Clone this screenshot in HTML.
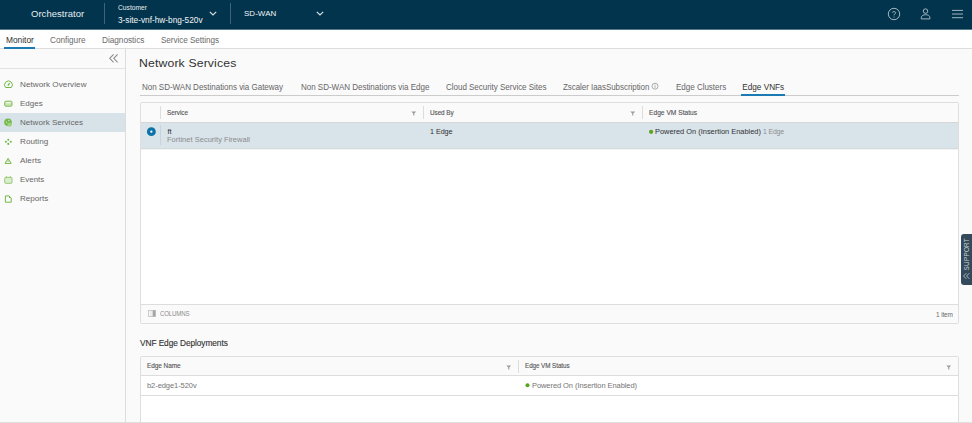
<!DOCTYPE html>
<html><head><meta charset="utf-8"><style>
html,body{margin:0;padding:0;width:972px;height:423px;overflow:hidden;background:#fafafa;font-family:"Liberation Sans", sans-serif}
.r{position:absolute;display:block}
.t{position:absolute;white-space:nowrap;font-family:"Liberation Sans", sans-serif}
</style></head><body>
<div class="r" style="left:0px;top:0px;width:972px;height:423px;background:#fafafa;"></div><div class="r" style="left:0px;top:0px;width:972px;height:29px;background:#02354d;"></div><div class="r" style="left:0px;top:28px;width:972px;height:1px;background:#012f45;"></div><div class="r" style="left:0px;top:29px;width:972px;height:1px;background:#557a8d;"></div><div class="r" style="left:0px;top:30px;width:972px;height:18px;background:#ffffff;"></div><div class="r" style="left:0px;top:48px;width:972px;height:1px;background:#dddddd;"></div><div class="r" style="left:104px;top:3px;width:1px;height:21px;background:#3f6479;"></div><div class="r" style="left:230px;top:3px;width:1px;height:21px;background:#3f6479;"></div><div class="r" style="left:4px;top:47px;width:31px;height:2px;background:#1a7bb3;"></div><div class="r" style="left:125px;top:49px;width:1px;height:374px;background:#dddddd;"></div><div class="r" style="left:0px;top:68px;width:125px;height:1px;background:#e3e3e3;"></div><div class="r" style="left:0px;top:113px;width:125px;height:19px;background:#d8e3e9;"></div><div class="r" style="left:140px;top:95px;width:819px;height:1px;background:#cccccc;"></div><div class="r" style="left:741px;top:94px;width:44px;height:2px;background:#1a7bb3;"></div><div class="r" style="left:140px;top:102px;width:819px;height:222px;background:#ffffff;border:1px solid #dedede;border-radius:2px;box-sizing:border-box"></div><div class="r" style="left:141px;top:103px;width:817px;height:19px;background:#fafafa;"></div><div class="r" style="left:141px;top:122px;width:817px;height:1px;background:#d6d6d6;"></div><div class="r" style="left:141px;top:123px;width:817px;height:25px;background:#d8e3ea;"></div><div class="r" style="left:141px;top:148px;width:817px;height:1px;background:#d5dadd;"></div><div class="r" style="left:141px;top:149px;width:817px;height:1px;background:#f3f3f3;"></div><div class="r" style="left:141px;top:304px;width:817px;height:1px;background:#dddddd;"></div><div class="r" style="left:141px;top:305px;width:817px;height:18px;background:#fafafa;"></div><div class="r" style="left:160px;top:106px;width:1px;height:13px;background:#dddddd;"></div><div class="r" style="left:160px;top:125px;width:1px;height:20px;background:#c8d2d8;"></div><div class="r" style="left:423px;top:106px;width:1px;height:13px;background:#dddddd;"></div><div class="r" style="left:642px;top:106px;width:1px;height:13px;background:#dddddd;"></div><div class="r" style="left:140px;top:356px;width:819px;height:80px;background:#ffffff;border:1px solid #dedede;border-radius:2px;box-sizing:border-box"></div><div class="r" style="left:141px;top:357px;width:817px;height:18px;background:#fafafa;"></div><div class="r" style="left:141px;top:375px;width:817px;height:1px;background:#dddddd;"></div><div class="r" style="left:141px;top:395px;width:817px;height:1px;background:#dddddd;"></div><div class="r" style="left:518px;top:360px;width:1px;height:13px;background:#dddddd;"></div><div class="r" style="left:0px;top:422px;width:972px;height:1px;background:#e0e0e0;"></div><div class="r" style="left:960.5px;top:233.5px;width:14px;height:51.5px;background:#34495a;border-radius:3px 0 0 3px"></div>
<svg class="r" style="left:208px;top:10px" width="10" height="7" viewBox="0 0 10 7"><path d="M1.8 1.8 L5 5 L8.2 1.8" fill="none" stroke="#d8e0e5" stroke-width="1.2"/></svg><svg class="r" style="left:314.5px;top:10px" width="10" height="7" viewBox="0 0 10 7"><path d="M1.8 1.8 L5 5 L8.2 1.8" fill="none" stroke="#d8e0e5" stroke-width="1.2"/></svg><svg class="r" style="left:886px;top:6px" width="16" height="16" viewBox="0 0 16 16"><circle cx="8" cy="8" r="5.7" fill="none" stroke="#b3c2cb" stroke-width="0.9"/><path d="M6.3 6.6 C6.3 5.3 9.7 5.3 9.7 6.8 C9.7 8 8 7.9 8 9.4" fill="none" stroke="#b3c2cb" stroke-width="0.9"/><circle cx="8" cy="10.9" r="0.5" fill="#b3c2cb"/></svg><svg class="r" style="left:918px;top:6px" width="16" height="16" viewBox="0 0 16 16"><circle cx="7.5" cy="5.1" r="2.25" fill="none" stroke="#b3c2cb" stroke-width="0.9"/><path d="M3.3 12.9 V11.6 C3.3 9.7 5.4 8.7 7.6 8.7 C9.8 8.7 11.9 9.7 11.9 11.6 V12.9 Z" fill="none" stroke="#b3c2cb" stroke-width="0.9"/></svg><svg class="r" style="left:950px;top:6px" width="16" height="16" viewBox="0 0 16 16"><path d="M2 4.4 H13 M2 8 H13 M2 11.7 H13" stroke="#b3c2cb" stroke-width="0.9"/></svg><svg class="r" style="left:107px;top:53px" width="14" height="12" viewBox="0 0 14 12"><path d="M6.6 1.3 L2.7 5.3 L6.6 9.3 M10.6 1.3 L6.8 5.3 L10.6 9.3" fill="none" stroke="#8c8c8c" stroke-width="1.05"/></svg><svg class="r" style="left:0px;top:70px" width="16" height="140" viewBox="0 70 16 140">
<path d="M5.55 87.5 A3.9 3.9 0 1 1 11.35 87.5 Z" fill="none" stroke="#74b84a" stroke-width="1.0"/>
<path d="M7.8 85.5 L9.7 83.1" stroke="#74b84a" stroke-width="1.25"/>
<rect x="4.7" y="101.2" width="7.3" height="5" rx="1.1" fill="#c9e3b6" stroke="#74b84a" stroke-width="0.9"/>
<rect x="6.1" y="102.2" width="4.6" height="1" fill="#ffffff"/>
<circle cx="8" cy="122.3" r="3.8" fill="#74b84a"/>
<path d="M6.2 121.3 L7.3 122.4 L6.2 123.5 Z" fill="#d8e3e9"/><circle cx="8.8" cy="120.5" r="0.7" fill="#d8e3e9"/>
<circle cx="9.6" cy="124.6" r="2.2" fill="#9fd07e"/>
<circle cx="8.3" cy="139.8" r="1.05" fill="#74b84a"/><circle cx="5.9" cy="141.8" r="1.05" fill="#74b84a"/><circle cx="10.8" cy="141.8" r="1.05" fill="#74b84a"/><circle cx="8.3" cy="143.9" r="1.05" fill="#74b84a"/>
<path d="M8.1 158.4 L11.2 163.4 H5 Z" fill="none" stroke="#74b84a" stroke-width="1" stroke-linejoin="round"/>
<path d="M8.1 160.3 V162" stroke="#74b84a" stroke-width="0.9"/>
<rect x="4.7" y="177.4" width="7.3" height="5.9" rx="0.9" fill="#dcedcf" stroke="#8cc46a" stroke-width="0.9"/>
<path d="M6.4 176.2 V177.8 M10.3 176.2 V177.8" stroke="#8cc46a" stroke-width="0.9"/>
<path d="M5.4 195.9 H9 L11.2 198.1 V202.2 H5.4 Z" fill="none" stroke="#74b84a" stroke-width="1"/>
<path d="M9 195.9 L11.2 198.1 H9 Z" fill="#74b84a"/>
</svg><svg class="r" style="left:146px;top:126px" width="11" height="11" viewBox="0 0 11 11"><circle cx="5.35" cy="5.65" r="4.45" fill="#0d72a8"/><circle cx="5.35" cy="5.65" r="1.15" fill="#ffffff"/></svg><svg class="r" style="left:411px;top:110.5px" width="6" height="6" viewBox="0 0 6 6"><path d="M0.3 0.5 H5.2 L3.3 2.5 V4.4 H2.2 V2.5 Z" fill="#9c9c9c"/></svg><svg class="r" style="left:629.5px;top:110.5px" width="6" height="6" viewBox="0 0 6 6"><path d="M0.3 0.5 H5.2 L3.3 2.5 V4.4 H2.2 V2.5 Z" fill="#9c9c9c"/></svg><svg class="r" style="left:506.3px;top:364.5px" width="6" height="6" viewBox="0 0 6 6"><path d="M0.3 0.5 H5.2 L3.3 2.5 V4.4 H2.2 V2.5 Z" fill="#9c9c9c"/></svg><svg class="r" style="left:945.6px;top:364.5px" width="6" height="6" viewBox="0 0 6 6"><path d="M0.3 0.5 H5.2 L3.3 2.5 V4.4 H2.2 V2.5 Z" fill="#9c9c9c"/></svg><svg class="r" style="left:646px;top:127px" width="10" height="10" viewBox="0 0 10 10"><circle cx="5.1" cy="4.8" r="2.1" fill="#5aa220"/></svg><svg class="r" style="left:524.8px;top:383.3px" width="5" height="5" viewBox="0 0 5 5"><circle cx="2.5" cy="2.3" r="2" fill="#5aa220"/></svg><svg class="r" style="left:650px;top:81px" width="10" height="10" viewBox="0 0 10 10"><circle cx="5" cy="5.2" r="3" fill="none" stroke="#909090" stroke-width="0.75"/><path d="M5 4.6 V6.8" stroke="#909090" stroke-width="0.75"/><circle cx="5" cy="3.7" r="0.45" fill="#909090"/></svg><svg class="r" style="left:147px;top:309px" width="10" height="9" viewBox="0 0 10 9"><rect x="1.6" y="1.5" width="6.8" height="6" fill="none" stroke="#bdbdbd" stroke-width="0.8"/><path d="M3.9 1.5 V7.5" stroke="#d0d0d0" stroke-width="0.7"/><rect x="5.6" y="1.5" width="2.8" height="6" fill="#a5a5a5"/></svg><svg class="r" style="left:962px;top:272px" width="9" height="8" viewBox="0 0 9 8"><path d="M4.3 1.2 L1.5 4 L4.3 6.8 M7.3 1.2 L4.5 4 L7.3 6.8" fill="none" stroke="#cfd8de" stroke-width="0.75"/></svg>
<div class="t" style="left:31.00px;top:10.28px;font-size:9.2px;line-height:9.2px;font-weight:400;color:#e9eef1;letter-spacing:0.056px;transform:scaleX(1.0289);transform-origin:0 0;">Orchestrator</div><div class="t" style="left:118.40px;top:4.89px;font-size:6.6px;line-height:6.6px;font-weight:400;color:#e6ebee;letter-spacing:0.018px;transform:scaleX(1.0099);transform-origin:0 0;">Customer</div><div class="t" style="left:118.40px;top:16.05px;font-size:8.3px;line-height:8.3px;font-weight:400;color:#f2f4f6;letter-spacing:-0.004px;transform:scaleX(0.9975);transform-origin:0 0;">3-site-vnf-hw-bng-520v</div><div class="t" style="left:244.20px;top:9.87px;font-size:7.8px;line-height:7.8px;font-weight:400;color:#f2f4f6;letter-spacing:0.053px;transform:scaleX(1.0206);transform-origin:0 0;">SD-WAN</div><div class="t" style="left:5.80px;top:35.96px;font-size:8.4px;line-height:8.4px;font-weight:400;color:#313131;letter-spacing:-0.007px;transform:scaleX(0.9966);transform-origin:0 0;">Monitor</div><div class="t" style="left:49.90px;top:35.96px;font-size:8.4px;line-height:8.4px;font-weight:400;color:#6a6a6a;letter-spacing:-0.033px;transform:scaleX(0.9837);transform-origin:0 0;">Configure</div><div class="t" style="left:101.90px;top:35.96px;font-size:8.4px;line-height:8.4px;font-weight:400;color:#6a6a6a;letter-spacing:-0.027px;transform:scaleX(0.9853);transform-origin:0 0;">Diagnostics</div><div class="t" style="left:160.50px;top:35.96px;font-size:8.4px;line-height:8.4px;font-weight:400;color:#6a6a6a;letter-spacing:-0.052px;transform:scaleX(0.9707);transform-origin:0 0;">Service Settings</div><div class="t" style="left:19.90px;top:80.98px;font-size:7.9px;line-height:7.9px;font-weight:400;color:#666666;letter-spacing:0.048px;transform:scaleX(1.0270);transform-origin:0 0;">Network Overview</div><div class="t" style="left:19.90px;top:100.06px;font-size:7.9px;line-height:7.9px;font-weight:400;color:#666666;letter-spacing:0.028px;transform:scaleX(1.0116);transform-origin:0 0;">Edges</div><div class="t" style="left:19.90px;top:119.12px;font-size:7.9px;line-height:7.9px;font-weight:400;color:#666666;letter-spacing:0.031px;transform:scaleX(1.0177);transform-origin:0 0;">Network Services</div><div class="t" style="left:19.90px;top:138.19px;font-size:7.9px;line-height:7.9px;font-weight:400;color:#666666;letter-spacing:0.048px;transform:scaleX(1.0259);transform-origin:0 0;">Routing</div><div class="t" style="left:19.90px;top:157.27px;font-size:7.9px;line-height:7.9px;font-weight:400;color:#666666;letter-spacing:0.057px;transform:scaleX(1.0338);transform-origin:0 0;">Alerts</div><div class="t" style="left:19.90px;top:176.34px;font-size:7.9px;line-height:7.9px;font-weight:400;color:#666666;letter-spacing:0.007px;transform:scaleX(1.0036);transform-origin:0 0;">Events</div><div class="t" style="left:19.90px;top:195.41px;font-size:7.9px;line-height:7.9px;font-weight:400;color:#666666;letter-spacing:0.035px;transform:scaleX(1.0181);transform-origin:0 0;">Reports</div><div class="t" style="left:139.00px;top:56.94px;font-size:11.6px;line-height:11.6px;font-weight:400;color:#313131;letter-spacing:0.135px;transform:scaleX(1.0550);transform-origin:0 0;">Network Services</div><div class="t" style="left:142.30px;top:83.53px;font-size:8.2px;line-height:8.2px;font-weight:400;color:#666666;letter-spacing:-0.035px;transform:scaleX(0.9815);transform-origin:0 0;">Non SD-WAN Destinations via Gateway</div><div class="t" style="left:300.70px;top:83.53px;font-size:8.2px;line-height:8.2px;font-weight:400;color:#666666;letter-spacing:-0.033px;transform:scaleX(0.9825);transform-origin:0 0;">Non SD-WAN Destinations via Edge</div><div class="t" style="left:446.00px;top:83.53px;font-size:8.2px;line-height:8.2px;font-weight:400;color:#666666;letter-spacing:-0.032px;transform:scaleX(0.9810);transform-origin:0 0;">Cloud Security Service Sites</div><div class="t" style="left:562.80px;top:83.53px;font-size:8.2px;line-height:8.2px;font-weight:400;color:#666666;letter-spacing:-0.044px;transform:scaleX(0.9744);transform-origin:0 0;">Zscaler IaasSubscription</div><div class="t" style="left:676.30px;top:83.53px;font-size:8.2px;line-height:8.2px;font-weight:400;color:#666666;letter-spacing:-0.031px;transform:scaleX(0.9832);transform-origin:0 0;">Edge Clusters</div><div class="t" style="left:742.30px;top:83.53px;font-size:8.2px;line-height:8.2px;font-weight:400;color:#313131;letter-spacing:0.001px;">Edge VNFs</div><div class="t" style="left:167.40px;top:109.59px;font-size:6.6px;line-height:6.6px;font-weight:400;color:#555555;letter-spacing:-0.047px;transform:scaleX(0.9712);transform-origin:0 0;-webkit-text-stroke:0.12px currentColor">Service</div><div class="t" style="left:430.00px;top:109.59px;font-size:6.6px;line-height:6.6px;font-weight:400;color:#555555;letter-spacing:-0.069px;transform:scaleX(0.9639);transform-origin:0 0;-webkit-text-stroke:0.12px currentColor">Used By</div><div class="t" style="left:648.70px;top:109.59px;font-size:6.6px;line-height:6.6px;font-weight:400;color:#555555;letter-spacing:0.010px;transform:scaleX(1.0065);transform-origin:0 0;-webkit-text-stroke:0.12px currentColor">Edge VM Status</div><div class="t" style="left:167.40px;top:127.81px;font-size:7.4px;line-height:7.4px;font-weight:400;color:#313131;letter-spacing:0.000px;">ft</div><div class="t" style="left:167.20px;top:136.09px;font-size:7.3px;line-height:7.3px;font-weight:400;color:#8c8c8c;letter-spacing:0.032px;transform:scaleX(1.0237);transform-origin:0 0;">Fortinet Security Firewall</div><div class="t" style="left:430.00px;top:127.91px;font-size:7.4px;line-height:7.4px;font-weight:400;color:#313131;letter-spacing:-0.056px;transform:scaleX(0.9726);transform-origin:0 0;">1 Edge</div><div class="t" style="left:655.10px;top:127.91px;font-size:7.4px;line-height:7.4px;font-weight:400;color:#313131;letter-spacing:0.003px;transform:scaleX(1.0019);transform-origin:0 0;">Powered On (Insertion Enabled)</div><div class="t" style="left:763.10px;top:127.91px;font-size:7.4px;line-height:7.4px;font-weight:400;color:#8c8c8c;letter-spacing:-0.149px;transform:scaleX(0.9305);transform-origin:0 0;">1 Edge</div><div class="t" style="left:159.70px;top:310.59px;font-size:6.6px;line-height:6.6px;font-weight:400;color:#8c8c8c;letter-spacing:-0.187px;transform:scaleX(0.9276);transform-origin:0 0;">COLUMNS</div><div class="t" style="left:935.90px;top:311.05px;font-size:7.0px;line-height:7.0px;font-weight:400;color:#6a6a6a;letter-spacing:-0.139px;transform:scaleX(0.9224);transform-origin:0 0;">1 item</div><div class="t" style="left:140.30px;top:338.99px;font-size:8.6px;line-height:8.6px;font-weight:400;color:#313131;letter-spacing:-0.072px;transform:scaleX(0.9666);transform-origin:0 0;-webkit-text-stroke:0.12px currentColor">VNF Edge Deployments</div><div class="t" style="left:147.00px;top:363.49px;font-size:6.6px;line-height:6.6px;font-weight:400;color:#555555;letter-spacing:-0.044px;transform:scaleX(0.9770);transform-origin:0 0;-webkit-text-stroke:0.12px currentColor">Edge Name</div><div class="t" style="left:525.30px;top:363.49px;font-size:6.6px;line-height:6.6px;font-weight:400;color:#555555;letter-spacing:-0.074px;transform:scaleX(0.9558);transform-origin:0 0;-webkit-text-stroke:0.12px currentColor">Edge VM Status</div><div class="t" style="left:147.10px;top:381.87px;font-size:7.8px;line-height:7.8px;font-weight:400;color:#737373;letter-spacing:-0.072px;transform:scaleX(0.9633);transform-origin:0 0;">b2-edge1-520v</div><div class="t" style="left:531.80px;top:381.87px;font-size:7.8px;line-height:7.8px;font-weight:400;color:#737373;letter-spacing:-0.069px;transform:scaleX(0.9600);transform-origin:0 0;">Powered On (Insertion Enabled)</div>
<div class="t" style="left:951px;top:252px;width:31px;font-size:6.4px;line-height:6px;color:#c5cfd6;transform:rotate(-90deg);letter-spacing:0.25px;text-align:center">SUPPORT</div>
</body></html>
